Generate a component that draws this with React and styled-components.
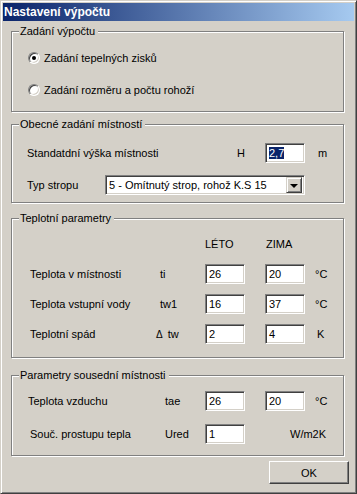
import React from "react";
import styled, { createGlobalStyle } from "styled-components";

const Global = createGlobalStyle`
  html, body {
    margin: 0;
    padding: 0;
    background: #d4d0c8;
  }
  body {
    font-family: "Liberation Sans", Arial, sans-serif;
    font-size: 11px;
    color: #000;
  }
`;

const Window = styled.div`
  width: 357px;
  height: 494px;
  box-sizing: border-box;
  border: 1px solid;
  border-color: #d4d0c8 #404040 #404040 #d4d0c8;
  box-shadow: inset 1px 1px #fff, inset -1px -1px #808080;
  padding: 2px;
  background: #d4d0c8;
  display: flex;
  flex-direction: column;
`;

const TitleBar = styled.div`
  height: 18px;
  background: linear-gradient(to right, #0a246a, #a6caf0);
  color: #fff;
  font-weight: bold;
  font-size: 12px;
  line-height: 18px;
  padding-left: 1px;
  white-space: nowrap;
`;

const Body = styled.div`
  padding: 0 5px 0 8px;
  display: flex;
  flex-direction: column;
`;

const Group = styled.div`
  position: relative;
  box-sizing: border-box;
  width: 333px;
  height: ${p => p.$h}px;
  margin-top: ${p => p.$mt}px;
  border: 1px solid #808080;
  box-shadow: inset 1px 1px #fff, 1px 1px #fff;
  padding: ${p => p.$pt}px 0 0 ${p => p.$pl}px;
  display: flex;
  flex-direction: column;
`;

const Legend = styled.span`
  position: absolute;
  top: -7px;
  left: 7px;
  padding: 0 3px 0 1px;
  line-height: 13px;
  background: #d4d0c8;
  white-space: nowrap;
`;

const RadioRow = styled.label`
  display: flex;
  align-items: center;
  gap: 4px;
  height: 16px;
  margin-top: ${p => p.$mt || 0}px;
`;

const Radio = styled.span`
  width: 12px;
  height: 12px;
  box-sizing: border-box;
  border-radius: 50%;
  border: 1px solid;
  border-color: #808080 #fff #fff #808080;
  box-shadow: inset 1px 1px #404040, inset -1px -1px #d4d0c8;
  background: #fff;
  display: flex;
  align-items: center;
  justify-content: center;
  &::after {
    content: "";
    width: 4px;
    height: 4px;
    border-radius: 50%;
    background: ${p => (p.$on ? "#000" : "transparent")};
  }
`;

const Row = styled.div`
  display: grid;
  grid-template-columns: ${p => p.$cols};
  align-items: center;
  height: ${p => p.$h || 20}px;
  margin-top: ${p => p.$mt || 0}px;
  white-space: nowrap;
`;

const Text = styled.span`
  margin-left: ${p => p.$ml || 0}px;
  grid-column: ${p => p.$span || "auto"};
`;

const Field = styled.div`
  box-sizing: border-box;
  width: ${p => p.$w || 40}px;
  height: 20px;
  background: #fff;
  border: 1px solid;
  border-color: #808080 #fff #fff #808080;
  box-shadow: inset 1px 1px #404040, inset -1px -1px #d4d0c8;
  padding: 0 3px;
  line-height: 18px;
`;

const Selected = styled.span`
  background: #0a246a;
  color: #fff;
`;

const Combo = styled(Field)`
  width: 200px;
  display: flex;
  align-items: center;
  justify-content: space-between;
  padding: 0 2px 0 3px;
`;

const DropButton = styled.span`
  width: 16px;
  height: 16px;
  box-sizing: border-box;
  background: #d4d0c8;
  border: 1px solid;
  border-color: #d4d0c8 #404040 #404040 #d4d0c8;
  box-shadow: inset 1px 1px #fff, inset -1px -1px #808080;
  display: flex;
  align-items: center;
  justify-content: center;
  &::after {
    content: "";
    border-left: 4px solid transparent;
    border-right: 4px solid transparent;
    border-top: 4px solid #000;
    margin-top: 1px;
  }
`;

const Delta = styled.span`
  font-size: 10px;
  margin-left: -4px;
  margin-right: 5px;
`;

const Footer = styled.div`
  display: flex;
  justify-content: flex-end;
  margin-top: 5px;
`;

const Button = styled.button`
  width: 80px;
  height: 23px;
  box-sizing: border-box;
  background: #d4d0c8;
  font: inherit;
  color: #000;
  border: 1px solid;
  border-color: #fff #404040 #404040 #fff;
  box-shadow: inset -1px -1px #808080, inset 1px 1px #d4d0c8;
  padding: 0;
`;

const tempCols = "130px 45px 60px 50px auto";
const airCols = "137px 40px 60px 50px auto";

export default function App() {
  return (
    <>
      <Global />
      <Window>
        <TitleBar>Nastavení výpočtu</TitleBar>
        <Body>
          <Group $h={81} $mt={10} $pt={18} $pl={16}>
            <Legend>Zadání výpočtu</Legend>
            <RadioRow>
              <Radio $on />
              Zadání tepelných zisků
            </RadioRow>
            <RadioRow $mt={16}>
              <Radio />
              Zadání rozměru a počtu rohoží
            </RadioRow>
          </Group>

          <Group $h={79} $mt={12} $pt={18} $pl={15}>
            <Legend>Obecné zadání místností</Legend>
            <Row $cols="210px 28px 53px auto">
              <Text>Standatdní výška místnosti</Text>
              <Text>H</Text>
              <Field>
                <Selected>2,7</Selected>
              </Field>
              <Text>m</Text>
            </Row>
            <Row $cols="78px auto" $mt={12}>
              <Text>Typ stropu</Text>
              <Combo>
                <span>5 - Omítnutý strop, rohož K.S 15</span>
                <DropButton />
              </Combo>
            </Row>
          </Group>

          <Group $h={140} $mt={15} $pt={18} $pl={18}>
            <Legend>Teplotní parametry</Legend>
            <Row $cols={tempCols} $h={13}>
              <Text $span="3">LÉTO</Text>
              <Text $ml={1}>ZIMA</Text>
            </Row>
            <Row $cols={tempCols} $mt={14}>
              <Text>Teplota v místnosti</Text>
              <Text>ti</Text>
              <Field>26</Field>
              <Field>20</Field>
              <Text>°C</Text>
            </Row>
            <Row $cols={tempCols} $mt={10}>
              <Text>Teplota vstupní vody</Text>
              <Text>tw1</Text>
              <Field>16</Field>
              <Field>37</Field>
              <Text>°C</Text>
            </Row>
            <Row $cols={tempCols} $mt={10}>
              <Text>Teplotní spád</Text>
              <Text>
                <Delta>Δ</Delta>tw
              </Text>
              <Field>2</Field>
              <Field>4</Field>
              <Text $ml={2}>K</Text>
            </Row>
          </Group>

          <Group $h={81} $mt={17} $pt={15} $pl={16}>
            <Legend>Parametry sousední místnosti</Legend>
            <Row $cols={airCols}>
              <Text>Teplota vzduchu</Text>
              <Text>tae</Text>
              <Field>26</Field>
              <Field>20</Field>
              <Text>°C</Text>
            </Row>
            <Row $cols={airCols} $mt={13}>
              <Text $ml={2}>Souč. prostupu tepla</Text>
              <Text>Ured</Text>
              <Field>1</Field>
              <Text $span="4 / 6" $ml={25}>
                W/m2K
              </Text>
            </Row>
          </Group>

          <Footer>
            <Button>OK</Button>
          </Footer>
        </Body>
      </Window>
    </>
  );
}
